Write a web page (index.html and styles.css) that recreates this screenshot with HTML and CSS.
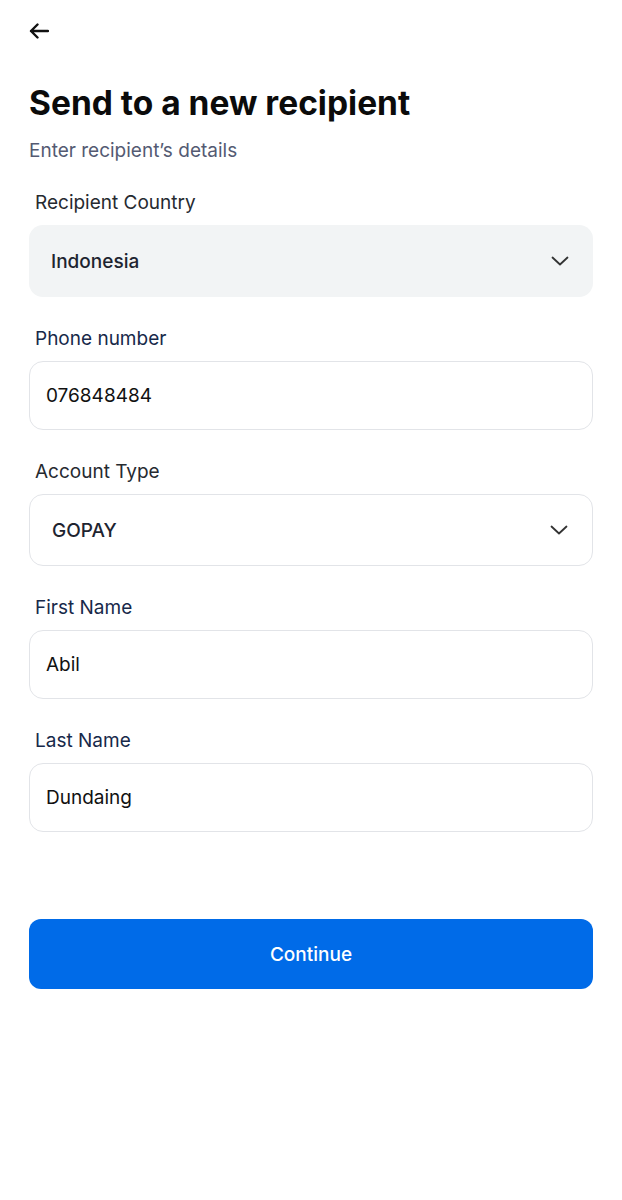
FILE: index.html
```html
<!DOCTYPE html>
<html lang="en">
<head>
<meta charset="utf-8">
<title>Send to a new recipient</title>
<link rel="stylesheet" href="styles.css">
</head>
<body>
<main class="page">
  <header class="topbar">
    <button class="back" aria-label="Back">
      <svg width="20" height="16" viewBox="0 0 20 16" fill="none" stroke="#111" stroke-width="2.4" stroke-linecap="round" stroke-linejoin="round"><path d="M19 8H2M8.5 1.5L2 8l6.5 6.5"/></svg>
    </button>
  </header>

  <section class="intro">
    <h1 class="title">Send to a new recipient</h1>
    <p class="subtitle">Enter recipient’s details</p>
  </section>

  <form class="form">
    <div class="field">
      <label class="label label-dark">Recipient Country</label>
      <div class="box box-filled select">
        <span class="select-value">Indonesia</span>
        <svg class="chev" width="18" height="10" viewBox="0 0 18 10" fill="none" stroke="#333" stroke-width="1.8" stroke-linecap="round" stroke-linejoin="round"><path d="M1.5 1.5L9 8.5l7.5-7"/></svg>
      </div>
    </div>

    <div class="field">
      <label class="label">Phone number</label>
      <div class="box input"><span class="input-value">076848484</span></div>
    </div>

    <div class="field">
      <label class="label label-dark">Account Type</label>
      <div class="box select">
        <span class="select-value">GOPAY</span>
        <svg class="chev" width="18" height="10" viewBox="0 0 18 10" fill="none" stroke="#333" stroke-width="1.8" stroke-linecap="round" stroke-linejoin="round"><path d="M1.5 1.5L9 8.5l7.5-7"/></svg>
      </div>
    </div>

    <div class="field">
      <label class="label">First Name</label>
      <div class="box input"><span class="input-value">Abil</span></div>
    </div>

    <div class="field">
      <label class="label">Last Name</label>
      <div class="box input"><span class="input-value">Dundaing</span></div>
    </div>
  </form>

  <button class="primary" type="button">Continue</button>
</main>
</body>
</html>
```

FILE: styles.css
```css
* { box-sizing: border-box; }
html, body { margin: 0; padding: 0; background: #fff; }
body {
  font-family: Inter, "Noto Sans", "Liberation Sans", sans-serif;
  color: #111;
}
.page {
  width: 622px;
  padding: 0 29px;
  display: flex;
  flex-direction: column;
}
.topbar {
  height: 83px;
  padding-top: 23px;
}
.back {
  border: 0;
  background: none;
  padding: 0;
  width: 20px;
  height: 16px;
  display: block;
  cursor: pointer;
}
.back svg { display: block; }
.intro { display: flex; flex-direction: column; }
.title {
  margin: 0;
  font-size: 33.5px;
  line-height: 40px;
  font-weight: 700;
  letter-spacing: 0;
  color: #0b0b0b;
}
.subtitle {
  margin: 16px 0 0;
  font-size: 19px;
  line-height: 24px;
  color: #545a72;
}
.form {
  margin-top: 27px;
  display: flex;
  flex-direction: column;
  gap: 29px;
}
.field {
  display: flex;
  flex-direction: column;
  gap: 10px;
}
.label {
  padding: 1px 0 0 6px;
  font-size: 19px;
  line-height: 24px;
  color: #17294a;
}
.label-dark { color: #262a30; }
.box {
  border-radius: 14px;
  display: flex;
  align-items: center;
}
.box-filled { background: #f2f4f5; border: 0; }
.select {
  height: 72px;
  padding: 0 24px 0 22px;
  justify-content: space-between;
}
.select:not(.box-filled) { border: 1px solid #e2e4e8; }
.select-value {
  font-size: 19px;
  font-weight: 500;
  color: #1e2430;
}
.chev { display: block; }
.input {
  height: 69px;
  border: 1px solid #e2e4e8;
  padding: 0 16px;
}
.input-value {
  font-size: 19px;
  color: #111;
}
.primary {
  margin-top: 87px;
  height: 70px;
  border: 0;
  border-radius: 12px;
  background: #006be8;
  color: #fff;
  font-family: inherit;
  font-size: 19px;
  font-weight: 500;
  cursor: pointer;
}
```
